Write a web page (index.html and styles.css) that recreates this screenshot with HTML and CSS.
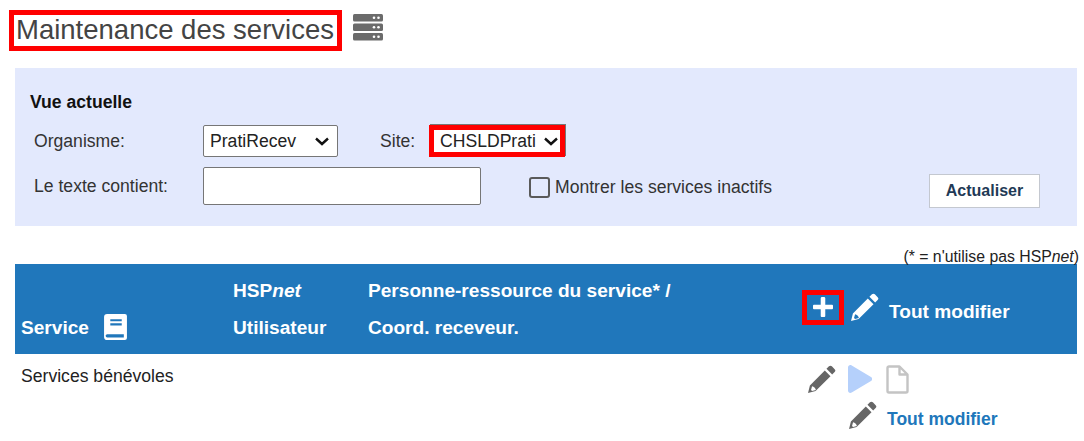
FILE: index.html
```html
<!DOCTYPE html>
<html lang="fr">
<head>
<meta charset="utf-8">
<title>Maintenance des services</title>
<link rel="stylesheet" href="styles.css">
</head>
<body>
<svg class="defs" width="0" height="0" aria-hidden="true">
  <symbol id="pencil" viewBox="0 0 28 28">
    <path fill-rule="evenodd" d="M21.2 1.3a2 2 0 0 1 2.8 0l2.7 2.7a2 2 0 0 1 0 2.8l-2.4 2.4-5.5-5.5zM17.2 5.3l5.5 5.5L8.3 25.2 1 27l1.8-7.3zM4.9 20.4l-1 3.7 1 1 3.7-1c-.3-1.700-2-3.400-3.700-3.700z"/>
  </symbol>
</svg>

<header class="title-row">
  <h1 class="title">Maintenance des services</h1>
  <svg class="server" viewBox="0 0 30 27" aria-hidden="true">
    <g fill="#6b6b6b">
      <rect y="0" width="30" height="7.500" rx="1.500"/>
      <rect y="9.500" width="30" height="7.500" rx="1.500"/>
      <rect y="19" width="30" height="7.500" rx="1.500"/>
    </g>
    <g fill="#fff">
      <circle cx="21" cy="3.700" r="1.300"/><circle cx="25.500" cy="3.700" r="1.300"/>
      <circle cx="21" cy="13.200" r="1.300"/><circle cx="25.500" cy="13.200" r="1.300"/>
      <circle cx="21" cy="22.700" r="1.300"/><circle cx="25.500" cy="22.700" r="1.300"/>
    </g>
  </svg>
</header>

<section class="panel">
  <h2 class="panel-title">Vue actuelle</h2>
  <div class="row row-first">
    <label class="lbl">Organisme:</label>
    <select class="sel sel-org"><option>PratiRecev</option></select>
    <label class="lbl-site">Site:</label>
    <select class="sel sel-site"><option>CHSLDPrati</option></select>
  </div>
  <div class="row row-second">
    <label class="lbl">Le texte contient:</label>
    <input class="txt" type="text">
    <label class="check"><span class="box"></span>Montrer les services inactifs</label>
    <button class="btn" type="button">Actualiser</button>
  </div>
</section>

<p class="note">(* = n'utilise pas HSP<i>net</i>)</p>

<div class="thead">
  <div class="th th-service"><span>Service</span>
    <svg class="book" viewBox="0 0 22 25" aria-hidden="true">
      <path fill-rule="evenodd" fill="#fff" d="M3 0h17a2 2 0 0 1 2 2v21a2 2 0 0 1-2 2H3a3 3 0 0 1-3-3V3a3 3 0 0 1 3-3zM6 5v2h11V5zM6 9v2h11V9zM3 19.500a1.500 1.500 0 0 0 0 3h16v-3z"/>
    </svg>
  </div>
  <div class="th th-two"><span>HSP<i>net</i></span><span>Utilisateur</span></div>
  <div class="th th-two"><span>Personne-ressource du service* /</span><span>Coord. receveur.</span></div>
  <div class="th th-actions">
    <span class="plus-box"><svg class="plus" viewBox="0 0 22 22" aria-hidden="true"><path fill="#fff" d="M8.500 1a1.500 1.500 0 0 1 1.500-1h2a1.500 1.500 0 0 1 1.500 1v7.500H21a1 1 0 0 1 1 1v3a1 1 0 0 1-1 1h-7.500V21a1 1 0 0 1-1 1h-3a1 1 0 0 1-1-1v-7.500H1a1 1 0 0 1-1-1v-3a1 1 0 0 1 1-1h7.500z"/></svg></span>
    <svg class="pen pen-white"><use href="#pencil"/></svg>
    <span class="all-head">Tout modifier</span>
  </div>
</div>

<div class="tbody">
  <div class="cell-name">Services bénévoles</div>
  <div class="cell-actions">
    <div class="icons">
      <svg class="pen pen-grey"><use href="#pencil"/></svg>
      <svg class="play" viewBox="0 0 24 28" aria-hidden="true"><path fill="#b5d0fb" d="M0 2.500C0 .5 2 -.5 3.700.5L23 12a2.300 2.300 0 0 1 0 4L3.700 27.500C2 28.500 0 27.500 0 25.500z"/></svg>
      <svg class="file" viewBox="0 0 23 29" aria-hidden="true"><path fill="none" stroke="#c4c4c4" stroke-width="2.400" stroke-linejoin="round" d="M3 1.500h10.500l8 8V26a1.500 1.500 0 0 1-1.500 1.500H3A1.500 1.500 0 0 1 1.500 26V3A1.500 1.500 0 0 1 3 1.500zM13.500 1.500v8h8"/></svg>
    </div>
    <div class="all-row">
      <svg class="pen pen-grey pen-raised"><use href="#pencil"/></svg>
      <a class="all-link">Tout modifier</a>
    </div>
  </div>
</div>
</body>
</html>
```

FILE: styles.css
```css
* { box-sizing: border-box; }
html, body { margin: 0; padding: 0; }
body {
  width: 1084px;
  height: 441px;
  overflow: hidden;
  background: #fff;
  color: #1a1a1a;
  font-family: "Liberation Sans", Arial, sans-serif;
  font-size: 17.6px;
  padding: 10px 7px 0 15px;
}
.defs { position: absolute; }

.title-row { display: flex; align-items: flex-start; height: 58px; margin-left: -6px; }
.title {
  margin: 0;
  width: 333px;
  height: 41px;
  border: 5px solid #f00;
  padding-left: 2px;
  font-weight: 400;
  font-size: 27.5px;
  line-height: 30px;
  white-space: nowrap;
  color: #444;
}
.server { width: 30px; height: 27px; margin: 4px 0 0 11px; }

.panel {
  height: 158px;
  background: #e3e9fd;
  padding: 24px 37px 0 15px;
}
.panel-title { margin: 0; font-size: 17.6px; line-height: 20px; font-weight: 700; color: #111; }
.row { display: flex; align-items: center; }
.row-first { height: 34px; margin-top: 12px; }
.row-second { height: 38px; margin-top: 9px; }
.lbl { width: 173px; padding-left: 4px; color: #333; flex: none; }
.lbl-site { width: 85px; padding-left: 42px; color: #333; flex: none; }
.sel {
  appearance: none;
  font: 17.6px "Liberation Sans", Arial, sans-serif;
  color: #222;
  background-color: #fff;
  background-image: url("data:image/svg+xml,%3Csvg xmlns='http://www.w3.org/2000/svg' viewBox='0 0 14 9'%3E%3Cpath fill='none' stroke='%23111' stroke-width='2.400' d='M1 1.500l6 5.500 6-5.500'/%3E%3C/svg%3E");
  background-repeat: no-repeat;
  background-size: 14px 9px;
  height: 32px;
  flex: none;
}
.sel-org {
  width: 135px;
  border: 1px solid #767676;
  border-radius: 2px;
  padding: 0 0 0 6px;
  background-position: right 8px center;
}
.sel-site {
  width: 136px;
  margin-left: 6px;
  border: 5px solid #f00;
  border-radius: 0;
  padding: 0 0 0 6px;
  background-position: right 2px center;
  box-shadow: 1px -1px 0 #777;
}
.txt {
  width: 278px;
  height: 38px;
  border: 1px solid #767676;
  border-radius: 2px;
  background: #fff;
  flex: none;
}
.check { display: flex; align-items: center; margin: 2px 0 0 48px; color: #333; white-space: nowrap; }
.box {
  width: 21px;
  height: 21px;
  margin-right: 5px;
  border: 2px solid #5a5a5a;
  border-radius: 3px;
  background: #e3e9fd;
}
.btn {
  width: 111px;
  height: 34px;
  margin: 9px 0 0 auto;
  border: 1px solid #c4c8d0;
  background: #fff;
  color: #1f3a56;
  font: 700 16px "Liberation Sans", Arial, sans-serif;
  flex: none;
}

.note {
  margin: 0 -2px 0 0;
  height: 38px;
  padding: 23px 0 0;
  text-align: right;
  font-size: 15.8px;
  line-height: 15px;
  color: #222;
}

.thead {
  display: grid;
  grid-template-columns: 212px 135px 435px 1fr;
  height: 90px;
  background: #2077bb;
  color: #fff;
  font-weight: 700;
  font-size: 19.1px;
}
.th { min-width: 0; }
.th-service {
  display: flex;
  align-items: center;
  gap: 15px;
  padding: 38px 0 0 6px;
}
.book { width: 23px; height: 26px; margin-top: -3px; }
.th-two {
  display: flex;
  flex-direction: column;
  gap: 17px;
  padding: 17px 0 0 6px;
  line-height: 20px;
  white-space: nowrap;
}
.th-actions {
  display: flex;
  align-items: center;
  padding: 2px 0 0 5px;
  white-space: nowrap;
}
.plus-box {
  display: flex;
  align-items: center;
  justify-content: center;
  width: 42px;
  height: 35px;
  margin-top: -6px;
  border: 5px solid #f00;
}
.plus { width: 20px; height: 20px; }
.pen { width: 29px; height: 29px; flex: none; }
.pen-white { fill: #fff; margin: -6px 0 0 6px; }
.pen-grey { fill: #666; }
.pen-raised { margin-top: -8px; }
.all-head { margin: 4px 0 0 10px; }

.tbody { display: grid; grid-template-columns: 782px 1fr; }
.cell-name { padding: 12px 0 0 6px; line-height: 20px; color: #222; }
.cell-actions { padding: 9px 0 0 10px; }
.icons { display: flex; align-items: center; gap: 13px; height: 32px; }
.play { width: 24px; height: 28px; margin-left: -1px; }
.file { width: 23px; height: 29px; margin-left: 1px; }
.all-row { display: flex; align-items: center; height: 29px; margin: 10px 0 0 41px; }
.all-link { margin-left: 10px; color: #2077bb; font-weight: 700; font-size: 17.5px; }
```
